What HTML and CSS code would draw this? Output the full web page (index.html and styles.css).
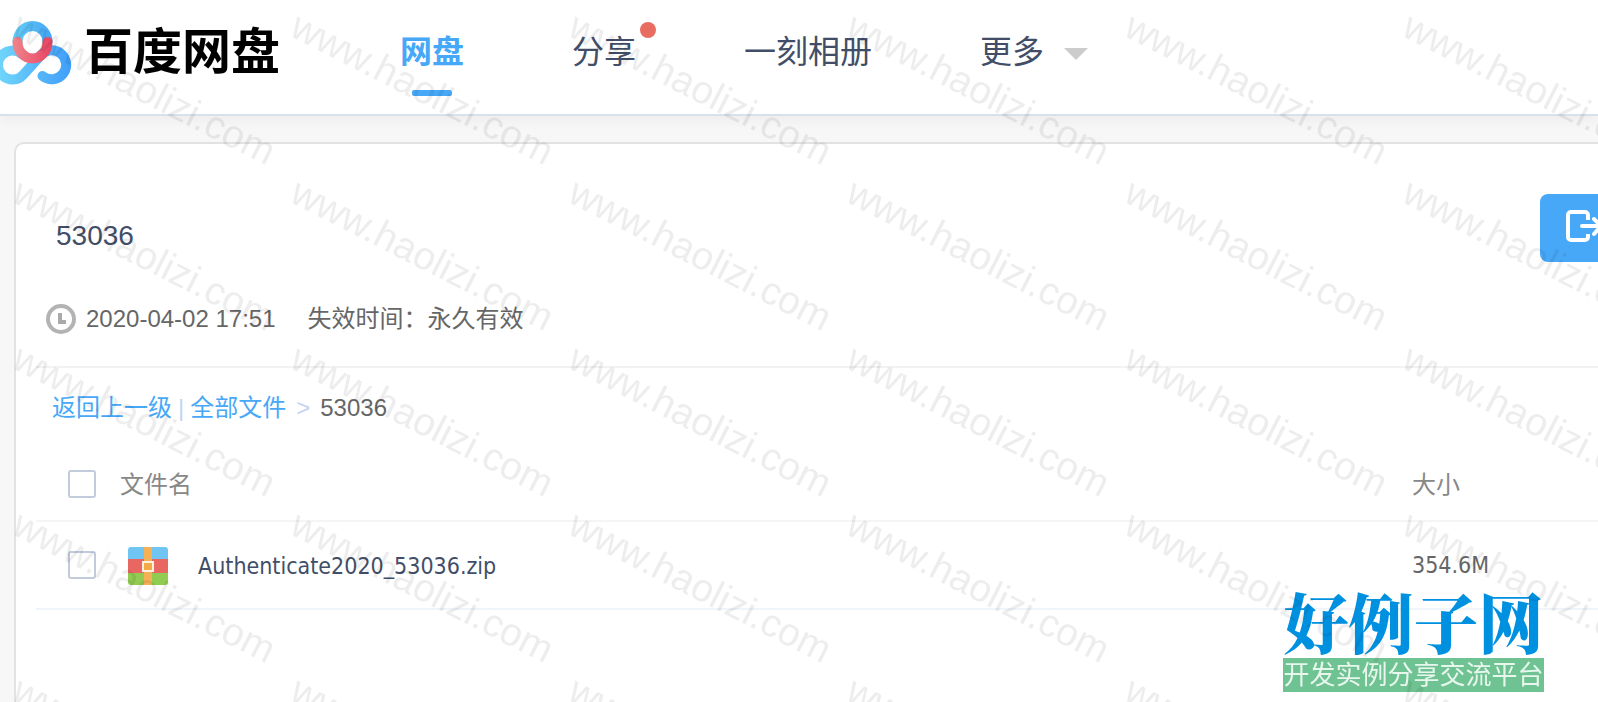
FILE: index.html
```html
<!DOCTYPE html>
<html lang="zh-CN">
<head>
<meta charset="utf-8">
<title>百度网盘</title>
<link rel="stylesheet" href="styles.css">
</head>
<body>
<header class="header">
  <a class="logo" href="#">
    <svg class="logo-icon" width="72" height="68" viewBox="0 0 72 68">
      <defs>
        <linearGradient id="blue" gradientUnits="userSpaceOnUse" x1="0" y1="40" x2="70" y2="40">
          <stop offset="0" stop-color="#6fd4fb"/>
          <stop offset="1" stop-color="#419ff9"/>
        </linearGradient>
        <linearGradient id="top" gradientUnits="userSpaceOnUse" x1="14" y1="20" x2="52" y2="20">
          <stop offset="0" stop-color="#66cdf7"/>
          <stop offset="1" stop-color="#43a5f5"/>
        </linearGradient>
        <linearGradient id="red" gradientUnits="userSpaceOnUse" x1="14" y1="30" x2="52" y2="30">
          <stop offset="0" stop-color="#ee8289"/>
          <stop offset="1" stop-color="#e84563"/>
        </linearGradient>
      </defs>
      <g fill="none" stroke-width="10" stroke-linecap="round">
        <path d="M22 36.200A14.500 14.500 0 1 0 23.300 56.700L40.700 37.300A14.500 14.500 0 1 1 42.500 58" stroke="url(#blue)"/>
        <path d="M17.500 24A15 16 0 0 1 47.500 24" stroke="url(#top)"/>
        <path d="M17.500 24A15 16.500 0 0 0 47.500 24" stroke="url(#red)"/>
      </g>
    </svg>
    <span class="logo-text">百度网盘</span>
  </a>
  <nav class="nav">
    <a class="nav-item active" href="#">网盘</a>
    <a class="nav-item" href="#">分享<i class="dot"></i></a>
    <a class="nav-item" href="#">一刻相册</a>
    <a class="nav-item" href="#">更多<i class="arrow"></i></a>
  </nav>
</header>

<main class="card">
  <div class="share-head">
    <h2 class="share-title">53036</h2>
    <button class="save-btn" type="button" aria-label="保存到网盘">
      <svg width="36" height="32" viewBox="0 0 36 32" fill="none" stroke="#fff" stroke-width="4">
        <path d="M22 10V5a3 3 0 0 0-3-3H5a3 3 0 0 0-3 3v22a3 3 0 0 0 3 3h14a3 3 0 0 0 3-3v-3"/>
        <path d="M16 16h18M28 9l7 7-7 8" stroke-linecap="round"/>
      </svg>
    </button>
  </div>
  <div class="share-info">
    <svg class="clock" width="30" height="30" viewBox="0 0 30 30" fill="none">
      <circle cx="15" cy="15" r="13" stroke="#b3b3b3" stroke-width="4"/>
      <path d="M14 9v9h6" stroke="#aaa" stroke-width="4"/>
    </svg>
    <span>2020-04-02 17:51</span>
    <span class="expire">失效时间：永久有效</span>
  </div>

  <div class="crumbs">
    <a href="#">返回上一级</a>
    <span class="bar">|</span>
    <a href="#">全部文件</a>
    <span class="gt">&gt;</span>
    <span>53036</span>
  </div>

  <table class="files">
    <thead>
      <tr>
        <th class="col-check"><input type="checkbox" aria-label="全选"></th>
        <th class="col-name">文件名</th>
        <th class="col-size">大小</th>
      </tr>
    </thead>
    <tbody>
      <tr>
        <td class="col-check"><input type="checkbox" id="f1"></td>
        <td class="col-name">
          <label class="file" for="f1">
            <svg width="40" height="38" viewBox="0 0 40 38">
              <path d="M3 0h34a3 3 0 0 1 3 3v9H0V3a3 3 0 0 1 3-3z" fill="#71c5f2"/>
              <path d="M0 12h40v14H0z" fill="#e96763"/>
              <path d="M0 26h40v9a3 3 0 0 1-3 3H3a3 3 0 0 1-3-3z" fill="#91cb52"/>
              <path d="M16 0h8v38h-8z" fill="#f5b156"/>
              <rect x="15" y="15" width="10" height="9" fill="#f3ab48" stroke="#fdf1e2" stroke-width="2"/>
            </svg>
            <span>Authenticate2020_53036.zip</span>
          </label>
        </td>
        <td class="col-size">354.6M</td>
      </tr>
    </tbody>
  </table>
</main>

<div class="site-badge">
  <div class="site-name">好例子网</div>
  <div class="site-slogan">开发实例分享交流平台</div>
</div>

<svg class="watermark" width="100%" height="100%">
  <defs>
    <pattern id="wm" x="0" y="4" width="278" height="166" patternUnits="userSpaceOnUse">
      <text class="wm-text" transform="translate(10 31) rotate(27)">www.haolizi.com</text>
    </pattern>
  </defs>
  <rect width="100%" height="100%" fill="url(#wm)"/>
</svg>
</body>
</html>
```

FILE: styles.css
```css
* {
  box-sizing: border-box;
}

body {
  margin: 0;
  min-height: 100vh;
  display: flex;
  flex-direction: column;
  background-color: #f7f7f7;
  font-family: "Liberation Sans", "Noto Sans CJK SC", sans-serif;
  font-size: 24px;
  color: #666;
  overflow: hidden;
}

a {
  color: #48a8f8;
  text-decoration: none;
}

.header {
  display: flex;
  align-items: center;
  height: 116px;
  padding-bottom: 10px;
  background-color: #fff;
  border-bottom: 2px solid #d7e0ec;
  box-shadow: 0 2px 14px rgba(0, 0, 0, 0.06);
}

.logo {
  display: flex;
  align-items: center;
  gap: 12px;
  color: #000;
}

.logo-icon {
  display: block;
}

.logo-text {
  font-size: 49px;
  line-height: 64px;
  font-weight: bold;
}

.nav {
  display: flex;
  gap: 108px;
  margin-left: 120px;
  font-size: 32px;
  line-height: 48px;
}

.nav-item {
  position: relative;
  color: #424e67;
  white-space: nowrap;
}

.active {
  color: #48a8f8;
  font-weight: bold;
}

.active::after {
  content: "";
  position: absolute;
  left: 12px;
  bottom: -20px;
  width: 40px;
  height: 6px;
  border-radius: 2px;
  background-color: #48a8f8;
}

.dot {
  position: absolute;
  left: 68px;
  top: -6px;
  width: 16px;
  height: 16px;
  border-radius: 50%;
  background-color: #e86c60;
}

.arrow {
  display: inline-block;
  margin-left: 20px;
  vertical-align: 3px;
  border: 12px solid transparent;
  border-top-color: #ccc;
  border-bottom: 0;
}

/* share panel */
.card {
  flex: 1;
  margin: 26px 0 0 14px;
  background-color: #fff;
  border: 2px solid #e2e2e2;
  border-right: 0;
  border-bottom: 0;
  border-top-left-radius: 10px;
}

.share-head {
  display: flex;
  justify-content: space-between;
  padding: 50px 0 0 40px;
}

.share-title {
  margin: 26px 0 0;
  font-size: 28px;
  line-height: 32px;
  font-weight: normal;
  color: #424e67;
}

.save-btn {
  width: 58px;
  height: 68px;
  padding: 0 0 4px 26px;
  border: 0;
  border-radius: 8px 0 0 8px;
  background-color: #48a8f8;
  overflow: hidden;
}

.save-btn svg {
  display: block;
}

.share-info {
  display: flex;
  align-items: center;
  margin-left: 20px;
  padding: 38px 0 28px 10px;
  line-height: 38px;
  border-bottom: 2px solid #f2f2f2;
}

.clock {
  margin-right: 10px;
}

.expire {
  margin-left: 32px;
}

.crumbs {
  display: flex;
  align-items: center;
  gap: 6px;
  padding: 22px 0 22px 36px;
  line-height: 36px;
}

.crumbs .bar,
.crumbs .gt {
  color: #c3d4f2;
}

.crumbs .gt {
  padding: 0 4px;
}

.files {
  width: calc(100% - 20px);
  margin-left: 20px;
  border-collapse: collapse;
  table-layout: fixed;
  text-align: left;
}

.files th {
  height: 73px;
  padding: 0 0 4px;
  font-weight: normal;
  color: #888;
  border-bottom: 2px solid #f5f5f5;
}

.files td {
  height: 88px;
  padding: 0;
  font-family: "DejaVu Sans Condensed", "Noto Sans", sans-serif;
  font-size: 23px;
  border-bottom: 2px solid #f0f5fb;
}

.files .col-check {
  width: 84px;
  padding: 0 0 0 32px;
}

.files .col-size {
  width: 186px;
}

.files input {
  appearance: none;
  display: block;
  width: 28px;
  height: 28px;
  margin: 0;
  border: 2px solid #c1cbdb;
  border-radius: 3px;
  background-color: #fff;
}

.file {
  display: flex;
  align-items: center;
  gap: 30px;
  padding: 2px 0 0 8px;
  color: #424e67;
}

/* corner badge */
.site-badge {
  position: fixed;
  right: 54px;
  bottom: 10px;
  width: 261px;
  text-align: center;
  white-space: nowrap;
}

.site-name {
  padding-bottom: 4px;
  font-family: "Noto Serif CJK SC", "Noto Sans CJK SC", serif;
  font-size: 65px;
  line-height: 68px;
  font-weight: 900;
  color: #0090e0;
}

.site-slogan {
  font-size: 26px;
  line-height: 34px;
  color: #e8f7ee;
  background-color: #6fc292;
}

.watermark {
  position: fixed;
  left: 0;
  top: 0;
  pointer-events: none;
}

.wm-text {
  font-family: "Liberation Sans", sans-serif;
  font-size: 39px;
  fill: #000;
  fill-opacity: 0.07;
}
```
